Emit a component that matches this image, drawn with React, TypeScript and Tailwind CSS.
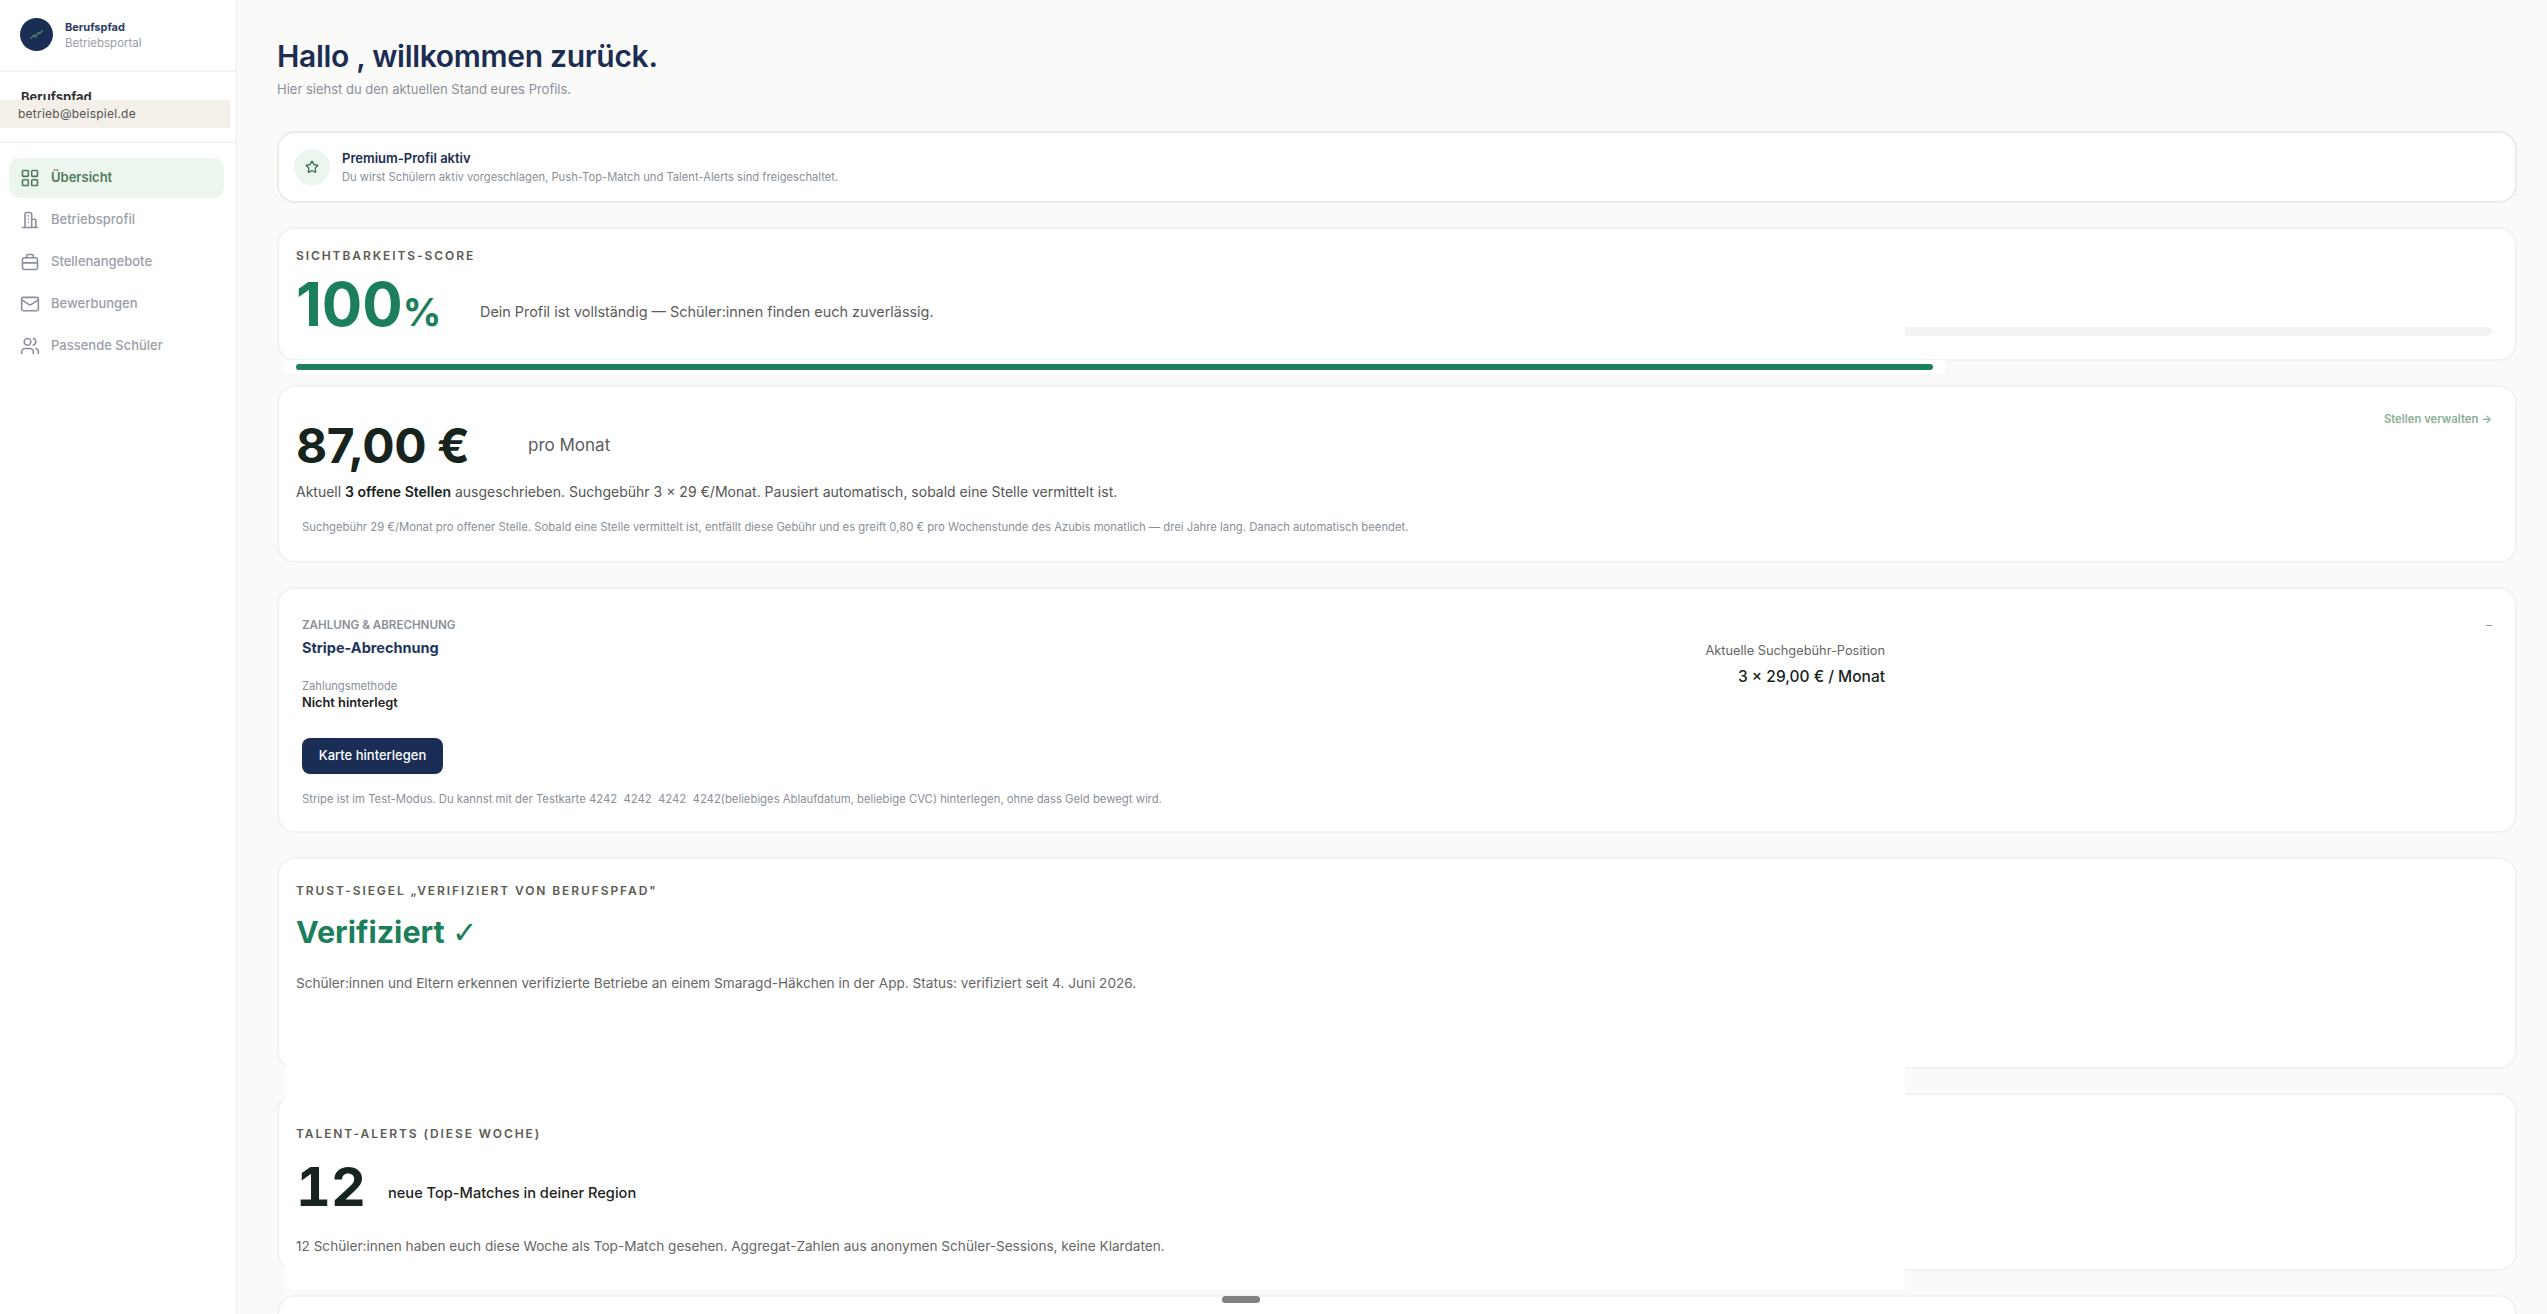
import React from "react";
import { LayoutGrid, Mail, Star, Users } from "lucide-react";

type IconProps = { className?: string; strokeWidth?: number };

function BuildingIcon({ className, strokeWidth }: IconProps) {
  return (
    <svg viewBox="0 0 24 24" className={className} fill="none" stroke="currentColor" strokeWidth={strokeWidth} strokeLinecap="round" strokeLinejoin="round">
      <path d="M6 21V5a2 2 0 0 1 2-2h4a2 2 0 0 1 2 2v16" />
      <path d="M14 11h3a2 2 0 0 1 2 2v8" />
      <path d="M3 21h18" />
      <path d="M10 7v.01M10 11v.01M10 15v.01" />
    </svg>
  );
}

function CaseIcon({ className, strokeWidth }: IconProps) {
  return (
    <svg viewBox="0 0 24 24" className={className} fill="none" stroke="currentColor" strokeWidth={strokeWidth} strokeLinecap="round" strokeLinejoin="round">
      <rect x="3" y="7" width="18" height="14" rx="2" />
      <path d="M8 7V5a2 2 0 0 1 2-2h4a2 2 0 0 1 2 2v2" />
      <path d="M3 13h18" />
    </svg>
  );
}

const navItems = [
  { label: "Übersicht", icon: LayoutGrid, active: true },
  { label: "Betriebsprofil", icon: BuildingIcon },
  { label: "Stellenangebote", icon: CaseIcon },
  { label: "Bewerbungen", icon: Mail },
  { label: "Passende Schüler", icon: Users },
];

function Sidebar() {
  return (
    <aside className="w-[237px] shrink-0 h-full bg-white border-r border-[#eeeeee] relative font-['Inter',sans-serif]">
      <div className="h-[72px] border-b-2 border-[#f3f3f3] flex items-center gap-3 pl-[20px] pb-[2px]">
        <div className="w-[33px] h-[33px] rounded-full bg-[#1a2d55] flex items-center justify-center">
          <svg viewBox="0 0 16 16" className="w-[15px] h-[15px]" fill="none" stroke="#4f8a5f" strokeWidth="1.4" strokeLinecap="round" strokeLinejoin="round">
            <path d="M2 12l3.5-3.5 1.5 2 3-4.5 1.5 1L14 4" />
          </svg>
        </div>
        <div className="flex flex-col pt-[3px]">
          <span className="text-[11px] leading-[15px] font-bold text-[#2b3d63]">Berufspfad</span>
          <span className="text-[11.5px] leading-[16px] text-[#9a9ea9]">Betriebsportal</span>
        </div>
      </div>
      <div className="h-[71px] border-b-2 border-[#f3f3f3] overflow-hidden relative">
        <div className="pl-[21px] pt-[17px] text-[13px] leading-[16px] font-bold text-[#333333]">Berufspfad</div>
        <div className="absolute left-0 top-[28px] w-[230px] h-[28px] bg-[#f4efe9] pl-[18px] flex items-center text-[12px] tracking-[0.02em] text-[#555555]">
          betrieb@beispiel.de
        </div>
      </div>
      <nav className="pl-[9px] pr-[12px] pt-[15px] flex flex-col gap-[2px]">
        {navItems.map((item) => {
          const Icon = item.icon;
          return (
            <div
              key={item.label}
              className={
                item.active
                  ? "h-[40px] rounded-[10px] bg-[#edf5ef] flex items-center gap-[11px] pl-[11px] text-[13px] font-semibold text-[#4f7a5c]"
                  : "h-[40px] rounded-[10px] flex items-center gap-[11px] pl-[11px] text-[13px] font-medium text-[#9a9ea9]"
              }
            >
              <Icon className={item.active ? "w-[20px] h-[20px] text-[#4f7a5c]" : "w-[20px] h-[20px] text-[#8a8f9c]"} strokeWidth={1.9} />
              {item.label}
            </div>
          );
        })}
      </nav>
    </aside>
  );
}

function Card({ className, children }: { className: string; children: React.ReactNode }) {
  return (
    <section className={"shrink-0 rounded-[18px] bg-white border-2 " + className}>
      <div className="relative z-10 h-full">{children}</div>
    </section>
  );
}

const labelClass = "text-[12px] leading-[16px] font-semibold tracking-[0.16em] uppercase text-[#5a5a52]";

export default function App() {
  return (
    <div className="relative flex h-[1314px] w-full overflow-hidden bg-[#fafaf8] font-['Inter',sans-serif]">
      <Sidebar />
      <main className="flex-1 min-w-0 pl-[40px] pr-[30px] pt-[35px]">
        <h1 className="text-[30px] leading-[42px] font-semibold tracking-[-0.01em] text-[#1b2d52]">Hallo , willkommen zurück.</h1>
        <p className="mt-[3px] text-[13px] leading-[18px] text-[#8a8f99]">Hier siehst du den aktuellen Stand eures Profils.</p>

        <div className="mt-[33px] flex flex-col gap-[24px]">
          <Card className="h-[72px] border-[#e8efe9] rounded-[16px]">
            <div className="h-full flex items-center gap-[12px] pl-[15px]">
              <div className="w-[36px] h-[36px] rounded-full bg-[#edf5ef] flex items-center justify-center">
                <Star className="w-[14px] h-[14px] text-[#3f7a55]" strokeWidth={2.4} />
              </div>
              <div>
                <div className="text-[13px] leading-[18px] font-semibold text-[#1b2d52]">Premium-Profil aktiv</div>
                <div className="mt-[2px] text-[11.2px] leading-[16px] text-[#8a8f99]">
                  Du wirst Schülern aktiv vorgeschlagen, Push-Top-Match und Talent-Alerts sind freigeschaltet.
                </div>
              </div>
            </div>
          </Card>

          <Card className="h-[134px] border-[#f2f2f2]">
            <div className="pt-[19px] pl-[17px]">
              <div className={labelClass}>Sichtbarkeits-Score</div>
              <div className="mt-[8px] flex items-center">
                <div className="w-[184px] leading-[64px] font-bold text-[#1a7f5a]">
                  <span className="text-[60px]">100</span>
                  <span className="text-[38px]">%</span>
                </div>
                <span className="text-[14.4px] text-[#5c5c5c]">Dein Profil ist vollständig — Schüler:innen finden euch zuverlässig.</span>
              </div>
            </div>
            <div className="absolute left-[1626px] top-[98px] w-[587px] h-[9px] rounded-r-full bg-[#f3f3f4]" />
          </Card>

          <Card className="h-[178px] border-[#f2f2f2]">
            <div className="pt-[29px] pl-[17px] pr-[23px]">
              <div className="flex items-center">
                <span className="w-[232px] text-[48px] leading-[60px] font-bold tracking-[-0.01em] text-[#16241d]">87,00 €</span>
                <span className="text-[17px] text-[#5c5c5c]">pro Monat</span>
                <span className="ml-auto -mt-[54px] text-[11.3px] font-semibold text-[#8ab097]">Stellen verwalten →</span>
              </div>
              <p className="mt-[6px] text-[14px] leading-[20px] text-[#555555]">
                Aktuell <strong className="font-semibold text-[#16241d]">3 offene Stellen</strong> ausgeschrieben. Suchgebühr 3 × 29 €/Monat. Pausiert automatisch, sobald eine Stelle vermittelt ist.
              </p>
              <p className="mt-[17px] ml-[6px] text-[11.3px] leading-[16px] text-[#8a8f99]">
                Suchgebühr 29 €/Monat pro offener Stelle. Sobald eine Stelle vermittelt ist, entfällt diese Gebühr und es greift 0,80 € pro Wochenstunde des Azubis monatlich — drei Jahre lang. Danach automatisch beendet.
              </p>
            </div>
          </Card>

          <Card className="h-[246px] border-[#f2f2f2]">
            <div className="pt-[28px] pl-[23px] pr-[23px]">
              <div className="flex">
                <div className="w-[1000px]">
                  <div className="text-[11.6px] leading-[16px] font-semibold uppercase text-[#8a8f99]">Zahlung &amp; Abrechnung</div>
                  <div className="mt-[3px] text-[14.5px] leading-[24px] font-bold text-[#1e3560]">Stripe-Abrechnung</div>
                  <div className="mt-[18px] text-[11.2px] leading-[16px] text-[#8a8f99]">Zahlungsmethode</div>
                  <div className="mt-[0px] text-[12.8px] leading-[18px] font-semibold text-[#222222]">Nicht hinterlegt</div>
                </div>
                <div className="w-[583px] pt-[24px] flex flex-col items-end">
                  <div className="text-[12.8px] leading-[20px] text-[#666666]">Aktuelle Suchgebühr-Position</div>
                  <div className="mt-[6px] text-[15.5px] leading-[20px] font-medium text-[#16241d]">3 × 29,00 € / Monat</div>
                </div>
                <div className="ml-auto text-[12px] leading-[16px] text-[#999999]">–</div>
              </div>
              <button className="mt-[26px] block w-[141px] h-[36px] rounded-[8px] bg-[#1a2d55] text-[13px] font-medium text-white">Karte hinterlegen</button>
              <p className="mt-[17px] text-[11.3px] leading-[16px] text-[#8a8f99] whitespace-pre">
                Stripe ist im Test-Modus. Du kannst mit der Testkarte 4242  4242  4242  4242(beliebiges Ablaufdatum, beliebige CVC) hinterlegen, ohne dass Geld bewegt wird.
              </p>
            </div>
          </Card>

          <Card className="h-[212px] border-[#f2f2f2]">
            <div className="pt-[24px] pl-[17px]">
              <div className={labelClass}>Trust-Siegel „Verifiziert von Berufspfad"</div>
              <div className="mt-[9px] text-[30.5px] leading-[48px] font-bold text-[#1a7f5a]">
                Verifiziert <span className="font-['DejaVu_Sans',sans-serif] font-normal">✓</span>
              </div>
              <p className="mt-[16px] text-[13.6px] leading-[20px] text-[#666666]">
                Schüler:innen und Eltern erkennen verifizierte Betriebe an einem Smaragd-Häkchen in der App. Status: verifiziert seit 4. Juni 2026.
              </p>
            </div>
          </Card>

          <Card className="h-[178px] border-[#f2f2f2]">
            <div className="pt-[31px] pl-[17px]">
              <div className={labelClass}>Talent-Alerts (diese Woche)</div>
              <div className="mt-[15px] flex items-center">
                <span className="w-[92px] text-[54px] leading-[60px] font-bold tabular-nums text-[#16241d]">12</span>
                <span className="mt-[13px] text-[14.6px] font-medium text-[#222222]">neue Top-Matches in deiner Region</span>
              </div>
              <p className="mt-[19px] text-[13.6px] leading-[20px] text-[#666666]">
                12 Schüler:innen haben euch diese Woche als Top-Match gesehen. Aggregat-Zahlen aus anonymen Schüler-Sessions, keine Klardaten.
              </p>
            </div>
          </Card>

          <Card className="h-[120px] border-[#f2f2f2]">
            <div />
          </Card>
        </div>
      </main>

      {/* leftover layers from the captured page, sitting on top of the cards */}
      <div className="absolute z-[1] left-[285px] top-[360px] w-[1660px] h-[13px] bg-white">
        <div className="ml-[11px] mt-[4px] w-[1637px] h-[6px] rounded-full bg-[#1a7f5a]" />
      </div>
      <div className="absolute z-[1] left-[285px] top-[1065px] w-[1620px] h-[225px] bg-white" />
      <div className="absolute z-20 left-[1222px] top-[1296px] w-[38px] h-[7px] rounded-full bg-[#808080]" />
    </div>
  );
}
